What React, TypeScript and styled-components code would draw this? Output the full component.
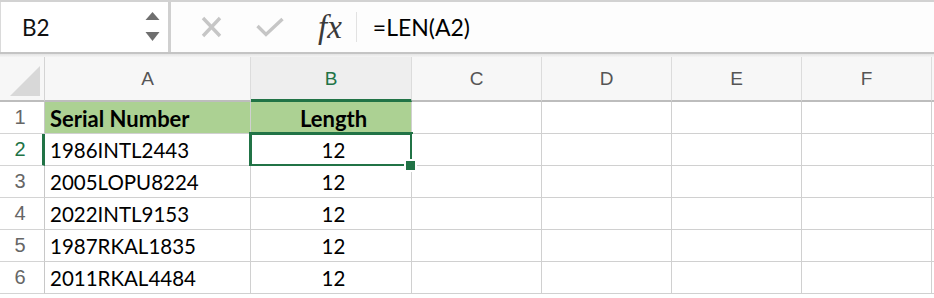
import styled, { createGlobalStyle, css } from 'styled-components';

const GREEN = '#217346';

const GlobalStyle = createGlobalStyle`
    html, body {
        margin: 0;
        padding: 0;
        background: #ffffff;
    }
    body {
        width: 934px;
        height: 298px;
        overflow: hidden;
        font-family: Lato, "Open Sans", sans-serif;
    }
`;

// Верхняя панель: поле имени + строка формул
const Toolbar = styled.div`
    display: flex;
    height: 50px;
    border-top: 2px solid #d2d2d2;
    border-bottom: 2px solid #c4c4c4;
    background: #fdfdfd;
`;

const NameBox = styled.div`
    width: 171px;
    display: flex;
    align-items: center;
    justify-content: space-between;
    padding: 0 8px 0 21px;
    box-sizing: border-box;
    border-left: 1px solid #dadada;
    border-right: 3px solid #d0d0d0;
    background: #ffffff;
    font-size: 22.5px;
    color: #111;
`;

const Spinner = styled.svg`
    width: 15px;
    height: 32px;
    flex-shrink: 0;
`;

const FormulaBar = styled.div`
    flex: 1;
    display: flex;
    align-items: center;
    padding-left: 30px;
`;

const ToolIcon = styled.svg<{ $w: number }>`
    width: ${(p) => p.$w}px;
    height: 22px;
    margin-right: 34px;
    flex-shrink: 0;
`;

const Fx = styled.span`
    font-family: "Liberation Serif", "DejaVu Serif", serif;
    font-style: italic;
    font-size: 33px;
    color: #3a3a3a;
    padding-right: 14px;
    border-right: 1px solid #e2e2e2;
    line-height: 30px;
`;

const Formula = styled.span`
    font-size: 23px;
    color: #000;
    padding-left: 16px;
`;

const Strip = styled.div`
    height: 3px;
    background: linear-gradient(#e4e4e4, #f4f4f4);
`;

// Сетка листа
const Sheet = styled.div`
    display: grid;
    grid-template-columns: 45px 206px 161px 130px 130px 130px 130px 1fr;
    grid-auto-rows: 32px;
    grid-template-rows: 45px;
`;

const Corner = styled.div`
    background: #f7f7f7;
    border-right: 1px solid #d4d4d4;
    border-bottom: 2px solid #bdbdbd;
    display: flex;
    align-items: flex-end;
    justify-content: flex-end;
    padding: 0 4px 4px 0;
    box-sizing: border-box;
`;

const ColHead = styled.div<{ $active?: boolean }>`
    display: flex;
    align-items: center;
    justify-content: center;
    box-sizing: border-box;
    font-family: "Liberation Sans", Arial, sans-serif;
    font-size: 19px;
    color: #555555;
    background: #f7f7f7;
    border-right: 1px solid #dcdcdc;
    border-bottom: 2px solid #bdbdbd;
    ${(p) =>
        p.$active &&
        css`
            background: #eeeeee;
            color: ${GREEN};
            border-bottom: 3px solid ${GREEN};
            padding-top: 1px;
        `}
`;

const RowHead = styled.div<{ $active?: boolean }>`
    display: flex;
    align-items: center;
    justify-content: center;
    box-sizing: border-box;
    padding-right: 4px;
    font-family: "Liberation Sans", Arial, sans-serif;
    font-size: 20px;
    color: #666666;
    background: #ffffff;
    border-right: 1px solid #c8c8c8;
    border-bottom: 1px solid #d4d4d4;
    ${(p) =>
        p.$active &&
        css`
            color: ${GREEN};
            border-right: 3px solid ${GREEN};
            padding-right: 2px;
        `}
`;

const Cell = styled.div<{ $fill?: boolean; $bold?: boolean; $center?: boolean; $selected?: boolean }>`
    position: relative;
    display: flex;
    align-items: center;
    justify-content: ${(p) => (p.$center ? 'center' : 'flex-start')};
    box-sizing: border-box;
    padding: 1px 0 0 5px;
    font-size: ${(p) => (p.$bold ? '22px' : '20.5px')};
    font-weight: ${(p) => (p.$bold ? 700 : 400)};
    color: #000;
    background: ${(p) => (p.$fill ? '#acd193' : '#ffffff')};
    border-right: 1px solid #d0d0d0;
    border-bottom: 1px solid #d0d0d0;
    white-space: nowrap;
    ${(p) =>
        p.$selected &&
        css`
            &::after {
                content: '';
                position: absolute;
                left: -2px;
                top: -2px;
                right: -2px;
                bottom: -2px;
                border: 3px solid ${GREEN};
                pointer-events: none;
            }
        `}
`;

// Маркер заполнения в углу выделенной ячейки
const FillHandle = styled.span`
    position: absolute;
    right: -6px;
    bottom: -7px;
    width: 9px;
    height: 9px;
    background: ${GREEN};
    border: 2px solid #ffffff;
    z-index: 2;
`;

const columns = ['A', 'B', 'C', 'D', 'E', 'F', ''];

const rows = [
    { serial: '1986INTL2443', len: '12' },
    { serial: '2005LOPU8224', len: '12' },
    { serial: '2022INTL9153', len: '12' },
    { serial: '1987RKAL1835', len: '12' },
    { serial: '2011RKAL4484', len: '12' },
];

const Empties = () => (
    <>
        {[0, 1, 2, 3, 4].map((i) => (
            <Cell key={i} />
        ))}
    </>
);

const Row = ({ n, serial, len }: { n: number; serial: string; len: string }) => {
    const selected = n === 2;
    return (
        <>
            <RowHead $active={selected}>{n}</RowHead>
            <Cell>{serial}</Cell>
            <Cell $center $selected={selected}>
                {len}
                {selected && <FillHandle />}
            </Cell>
            <Empties />
        </>
    );
};

export default function App() {
    return (
        <>
            <GlobalStyle />
            <Toolbar>
                <NameBox>
                    <span>B2</span>
                    <Spinner viewBox="0 0 15 32">
                        <path d="M0.5 9 L7.5 1 L14.5 9 Z" fill="#6f6f6f" />
                        <path d="M0.5 21 L14.5 21 L7.5 30 Z" fill="#6f6f6f" />
                    </Spinner>
                </NameBox>
                <FormulaBar>
                    <ToolIcon $w={21} viewBox="0 0 21 22">
                        <path d="M2 2 L19 20 M19 2 L2 20" stroke="#c6c6c6" strokeWidth="3.4" fill="none" />
                    </ToolIcon>
                    <ToolIcon $w={28} viewBox="0 0 28 22">
                        <path d="M1.5 10 L10 18.5 L26.5 3" stroke="#c6c6c6" strokeWidth="3.4" fill="none" />
                    </ToolIcon>
                    <Fx>fx</Fx>
                    <Formula>=LEN(A2)</Formula>
                </FormulaBar>
            </Toolbar>
            <Strip />
            <Sheet>
                <Corner>
                    <svg width="30" height="30" viewBox="0 0 30 30">
                        <path d="M30 0 L30 30 L0 30 Z" fill="#d8d8d8" />
                    </svg>
                </Corner>
                {columns.map((c) => (
                    <ColHead key={c || 'g'} $active={c === 'B'}>
                        {c}
                    </ColHead>
                ))}

                <RowHead>1</RowHead>
                <Cell $fill $bold>Serial Number</Cell>
                <Cell $fill $bold $center>Length</Cell>
                <Empties />

                {rows.map((r, i) => (
                    <Row key={r.serial} n={i + 2} serial={r.serial} len={r.len} />
                ))}
            </Sheet>
        </>
    );
}
